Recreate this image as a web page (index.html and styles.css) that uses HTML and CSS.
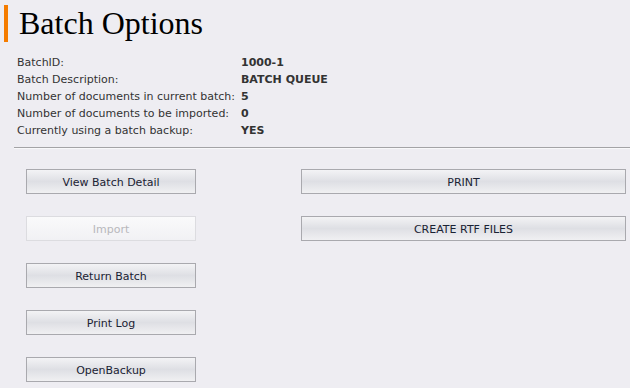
FILE: index.html
```html
<!DOCTYPE html>
<html lang="en">
    <head>
        <meta charset="UTF-8" />
        <title>Batch Options</title>
        <link rel="stylesheet" href="styles.css">
    </head>

    <body>
        <!-- Заголовок -->
        <h1 class="page-title">Batch Options</h1>

        <!-- Сведения о пакете -->
        <table class="batch-info">
            <tr><td class="info-label">BatchID:</td><td class="info-value">1000-1</td></tr>
            <tr><td class="info-label">Batch Description:</td><td class="info-value">BATCH QUEUE</td></tr>
            <tr><td class="info-label">Number of documents in current batch:</td><td class="info-value">5</td></tr>
            <tr><td class="info-label">Number of documents to be imported:</td><td class="info-value">0</td></tr>
            <tr><td class="info-label">Currently using a batch backup:</td><td class="info-value">YES</td></tr>
        </table>

        <hr class="divider">

        <!-- Кнопки -->
        <div class="actions">
            <div class="actions-col left">
                <button class="btn">View Batch Detail</button>
                <button class="btn" disabled>Import</button>
                <button class="btn">Return Batch</button>
                <button class="btn">Print Log</button>
                <button class="btn">OpenBackup</button>
            </div>
            <div class="actions-col right">
                <button class="btn">PRINT</button>
                <button class="btn">CREATE RTF FILES</button>
            </div>
        </div>
    </body>
</html>
```

FILE: styles.css
```css
* {
    margin: 0;
    padding: 0;
    box-sizing: border-box;
}

body {
    background-color: #eeedf2;
    font-family: "DejaVu Sans", Verdana, sans-serif;
    font-size: 11px;
    color: #333;
}

/* Заголовок страницы */
.page-title {
    margin: 5px 0 0 4px;
    padding-left: 11px;
    border-left: 4px solid #f57c00;
    height: 37px;
    font-family: "Liberation Serif", "Times New Roman", serif;
    font-weight: normal;
    font-size: 32px;
    line-height: 37px;
    color: #000;
}

/* Таблица со сведениями */
.batch-info {
    margin: 12px 0 0 17px;
    border-collapse: collapse;
}
.batch-info td {
    height: 17px;
    padding: 0;
    white-space: nowrap;
}
.info-label {
    padding-right: 6px !important;
}
.info-value {
    font-weight: bold;
}

.divider {
    margin: 8px 0 0 14px;
    border: none;
    border-top: 1px solid #a3a3a6;
    border-bottom: 1px solid #f8f8fa;
}

/* Кнопки */
.actions {
    display: flex;
    padding: 20px 4px 0 26px;
}
.actions-col {
    display: flex;
    flex-direction: column;
    gap: 22px;
}
.actions-col.left {
    width: 170px;
}
.actions-col.right {
    flex: 1;
    margin-left: 105px;
}
.btn {
    height: 25px;
    width: 100%;
    padding-top: 1px;
    border: 1px solid #a9a9ae;
    background: linear-gradient(#f3f3f5, #dedfe4 50%, #f0f0f2);
    font-family: "DejaVu Sans", Verdana, sans-serif;
    font-size: 11px;
    color: #1a2233;
    cursor: pointer;
}
.btn:disabled {
    border-color: #dcdce0;
    background: linear-gradient(#fafafb, #f1f1f4);
    color: #b8b8bc;
    cursor: default;
}
```
